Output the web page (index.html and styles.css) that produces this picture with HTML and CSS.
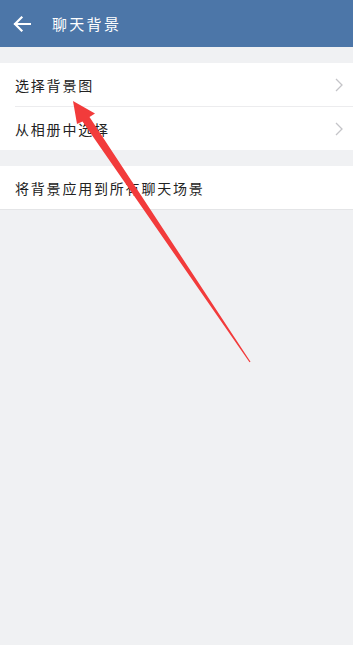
FILE: index.html
```html
<!DOCTYPE html>
<html lang="zh">
<head>
<meta charset="utf-8">
<title>聊天背景</title>
<link rel="stylesheet" href="styles.css">
</head>
<body>
<div class="page">
  <header class="topbar">
    <svg class="back" width="18" height="16" viewBox="0 0 18 16"><path d="M17 8H2M8.5 1.5L2 8l6.5 6.5" fill="none" stroke="#fff" stroke-width="2.2" stroke-linecap="square"/></svg>
    <span class="title">聊天背景</span>
  </header>
  <section class="group first">
    <div class="row"><span class="label">选择背景图</span><svg class="chev" width="8" height="14" viewBox="0 0 8 14"><path d="M1 1l6 6-6 6" fill="none" stroke="#c4c4c8" stroke-width="1.3"/></svg></div>
    <div class="row"><span class="label">从相册中选择</span><svg class="chev" width="8" height="14" viewBox="0 0 8 14"><path d="M1 1l6 6-6 6" fill="none" stroke="#c4c4c8" stroke-width="1.3"/></svg></div>
  </section>
  <section class="group">
    <div class="row"><span class="label">将背景应用到所有聊天场景</span></div>
  </section>
  <svg class="annot" width="353" height="645" viewBox="0 0 353 645"><polygon points="73,101 77,124 82.5,121.5 249.5,362.3 250.5,361.7 89.5,117 95,113.5" fill="#f23b3b"/></svg>
</div>
</body>
</html>
```
FILE: styles.css
```css
* { box-sizing: border-box; }
html, body { margin: 0; padding: 0; }
body {
  background: #f0f1f3;
  font-family: "Noto Sans CJK SC", "Noto Sans", sans-serif;
  color: #222;
}
.page { position: relative; width: 353px; height: 645px; overflow: hidden; }
.topbar {
  height: 47px;
  background: #4c76a8;
  display: flex;
  align-items: center;
  padding-left: 13px;
}
.back { flex: none; }
.title {
  margin-left: 21px;
  color: #fff;
  font-size: 15px;
  letter-spacing: 2.3px;
}
.group {
  background: #fff;
  margin-top: 16px;
  padding-left: 15px;
  border-bottom: 1px solid #e4e5e7;
}
.group.first { border-bottom: none; }
.row {
  height: 43px;
  display: flex;
  align-items: center;
  justify-content: space-between;
  padding-right: 10px;
}
.group.first .row:first-child { border-bottom: 1px solid #ececee; height: 44px; }
.label {
  font-size: 14px;
  letter-spacing: 1.8px;
}
.chev { flex: none; }
.annot { position: absolute; left: 0; top: 0; pointer-events: none; }
```
